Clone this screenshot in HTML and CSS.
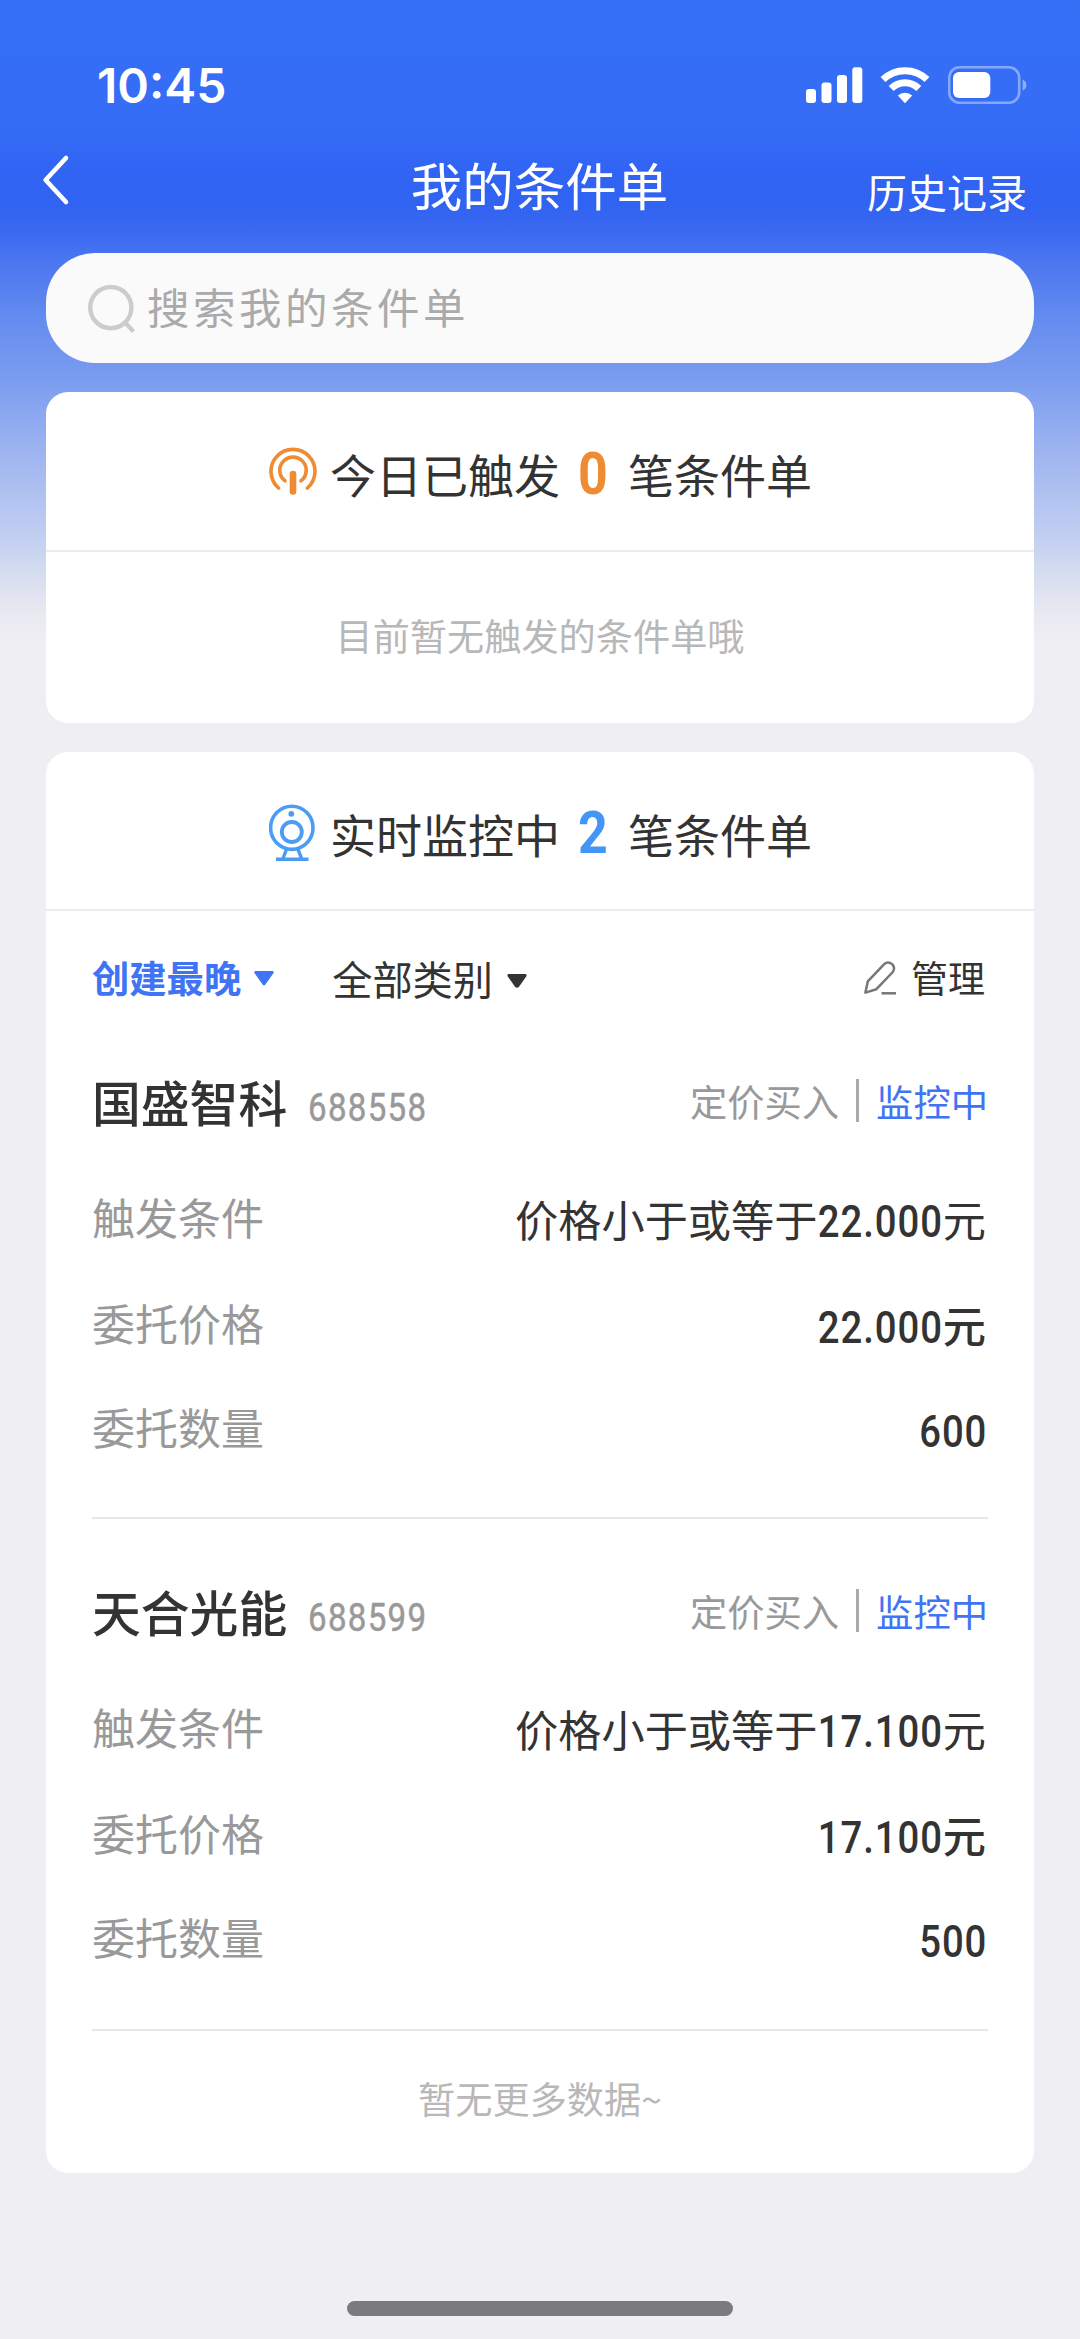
FILE: index.html
```html
<!DOCTYPE html>
<html lang="zh-CN">
<head>
<meta charset="utf-8">
<title>我的条件单</title>
<link rel="stylesheet" href="styles.css">
</head>
<body>
<div class="screen">
  <header class="status-bar">
    <span class="clock">10:45</span>
    <div class="status-icons">
      <svg class="signal" width="57" height="38" viewBox="0 0 57 38" fill="#fff">
        <rect x="0" y="23" width="10" height="14" rx="3"/>
        <rect x="15.5" y="16.5" width="10" height="20.5" rx="3"/>
        <rect x="31" y="9" width="10" height="28" rx="3"/>
        <rect x="46.3" y="1.3" width="10" height="35.7" rx="3"/>
      </svg>
      <svg class="wifi" width="50" height="38" viewBox="0 0 50 38">
        <g fill="none" stroke="#fff" stroke-width="7">
          <path d="M3 13.6A31.5 31.5 0 0 1 47 13.6"/>
          <path d="M11.2 22.4A19.6 19.6 0 0 1 38.8 22.4"/>
        </g>
        <path fill="#fff" d="M25 37.3L17.8 29.6A10.6 10.6 0 0 1 32.2 29.6Z"/>
      </svg>
      <svg class="battery" width="80" height="38" viewBox="0 0 80 38">
        <rect x="1.2" y="1.2" width="70" height="35.6" rx="10.5" fill="none" stroke="#fff" stroke-opacity=".4" stroke-width="2.6"/>
        <rect x="5" y="6" width="37.3" height="26" rx="6" fill="#fff"/>
        <path d="M74.6 13.5Q78.3 15 78.3 19T74.6 24.5Z" fill="#fff" fill-opacity=".45"/>
      </svg>
    </div>
  </header>

  <nav class="nav">
    <svg class="back" width="30" height="52" viewBox="0 0 30 52" fill="none" stroke="#fff" stroke-width="4.6" stroke-linecap="round" stroke-linejoin="round"><path d="M25 4L4.6 26L25 48"/></svg>
    <h1 class="nav-title">我的条件单</h1>
    <a class="nav-link">历史记录</a>
  </nav>

  <div class="search">
    <svg width="48" height="50" viewBox="0 0 48 50" fill="none" stroke="#ccc" stroke-width="4.4"><circle cx="22.8" cy="24.6" r="20.6"/><path d="M37 39.5L45.5 48.5"/></svg>
    <span class="placeholder">搜索我的条件单</span>
  </div>

  <section class="card triggered">
    <div class="card-head">
      <svg class="head-icon" width="48" height="50" viewBox="0 0 48 50" fill="none" stroke="#ee8b33" stroke-linecap="round">
        <path stroke-width="3.6" d="M9.6 42A22 22 0 1 1 38.4 42"/>
        <path stroke-width="3.6" d="M16 34.8A13.2 13.2 0 1 1 32 34.8"/>
        <path stroke-width="6.6" d="M24 28V45.5"/>
      </svg>
      <span class="head-text">今日已触发</span>
      <b class="count orange">0</b>
      <span class="head-text">笔条件单</span>
    </div>
    <p class="empty">目前暂无触发的条件单哦</p>
  </section>

  <section class="card monitoring">
    <div class="card-head">
      <svg class="head-icon cam" width="48" height="58" viewBox="0 0 48 58" fill="none" stroke="#4a9cf5">
        <ellipse cx="22.8" cy="23.8" rx="21.2" ry="21.6" stroke-width="3.6"/>
        <circle cx="22.8" cy="28" r="10" stroke-width="3.8"/>
        <circle cx="22.3" cy="9.8" r="2.9" fill="#4a9cf5" stroke="none"/>
        <path stroke-width="3.4" d="M17.6 45L14.2 54M28.8 45L32.4 54M7 55.3H39.5"/>
      </svg>
      <span class="head-text">实时监控中</span>
      <b class="count blue">2</b>
      <span class="head-text">笔条件单</span>
    </div>

    <div class="filters">
      <span class="filter-sort">创建最晚</span>
      <svg class="caret" width="20" height="15" viewBox="0 0 20 15" fill="#3f74f4"><path d="M1.5 0H18.5Q20.6 .4 19.2 2.6L11.4 13.4Q10 15.6 8.6 13.4L.8 2.6Q-.6 .4 1.5 0Z"/></svg>
      <span class="filter-type">全部类别</span>
      <svg class="caret" width="20" height="14" viewBox="0 0 20 14" fill="#333"><path d="M1.5 0H18.5Q20.4 .4 19.2 2.4L12 12.8Q10 14.8 8 12.8L.8 2.4Q-.4 .4 1.5 0Z"/></svg>
      <span class="manage">
        <svg width="34" height="36" viewBox="0 0 34 36" fill="none" stroke="#777" stroke-width="2.5" stroke-linejoin="round"><path d="M2.4 32.6L4.8 21.4L21.2 4.2Q25 .8 29.4 4.4Q32.4 8 29.8 12L13.4 29.2Z"/><path d="M18.5 33.3H33"/></svg>
        管理
      </span>
    </div>

    <article class="order">
      <div class="order-head">
        <h2 class="stock">国盛智科</h2><span class="code">688558</span>
        <span class="kind">定价买入</span><i class="bar"></i><span class="state">监控中</span>
      </div>
      <div class="row"><span class="label">触发条件</span><span class="value">价格小于或等于<span class="num">22.000</span>元</span></div>
      <div class="row price"><span class="label">委托价格</span><span class="value strong"><span class="num">22.000</span>元</span></div>
      <div class="row amount"><span class="label">委托数量</span><span class="value"><span class="num qty">600</span></span></div>
    </article>

    <article class="order">
      <div class="order-head">
        <h2 class="stock">天合光能</h2><span class="code">688599</span>
        <span class="kind">定价买入</span><i class="bar"></i><span class="state">监控中</span>
      </div>
      <div class="row"><span class="label">触发条件</span><span class="value">价格小于或等于<span class="num">17.100</span>元</span></div>
      <div class="row price"><span class="label">委托价格</span><span class="value strong"><span class="num">17.100</span>元</span></div>
      <div class="row amount"><span class="label">委托数量</span><span class="value"><span class="num qty">500</span></span></div>
    </article>

    <p class="no-more">暂无更多数据~</p>
  </section>

  <div class="home-indicator"></div>
</div>
</body>
</html>
```
FILE: styles.css
```css
* { box-sizing: border-box; margin: 0; padding: 0; }

body {
  width: 1080px;
  font-family: "Noto Sans CJK SC", sans-serif;
  color: #333;
}

svg { display: block; flex: none; }

.screen {
  width: 1080px;
  height: 2339px;
  display: flex;
  flex-direction: column;
  padding: 0 46px;
  overflow: hidden;
  white-space: nowrap;
  background: #eeeef3 linear-gradient(#356ff6 0, #356df6 120px, #3164f4 170px, #3163f2 205px, #3c6af0 235px, #4a76f0 260px, #658cef 320px, #7b9df0 380px, #a4b8f0 465px, #c3d0f0 540px, #d6ddf0 575px, #e9e9f1 615px, #eeeef3 640px) no-repeat;
}

.status-bar {
  height: 116px;
  padding: 55px 6px 0 51px;
  display: flex;
  align-items: center;
  justify-content: space-between;
}
.clock { color: #fff; font: 600 48px/60px Inter, sans-serif; }
.status-icons { display: flex; align-items: center; margin-top: -2px; }
.wifi { margin-left: 17px; }
.battery { margin-left: 18px; }

.nav {
  height: 137px;
  display: grid;
  grid-template-columns: 1fr auto 1fr;
  align-items: center;
  color: #fff;
}
.back { margin: -9px 0 0 -5px; }
.nav-title { font-size: 51.5px; font-weight: 400; line-height: 60px; margin: -2px 1px 0 0; }
.nav-link { justify-self: end; font-size: 40px; line-height: 48px; margin: 12px 7px 0 0; }

.search {
  height: 110px;
  border-radius: 49px;
  background: #fafafa;
  display: flex;
  align-items: center;
  padding-left: 42px;
}
.placeholder { margin: -6px 0 0 11px; font-size: 42.5px; letter-spacing: 3.5px; color: #aaa; }

.card { background: #fff; border-radius: 22px; margin-top: 29px; }
.triggered { height: 331px; }
.monitoring { height: 1421px; }

.card-head {
  height: 159px;
  display: flex;
  align-items: center;
  justify-content: center;
  border-bottom: 2px solid #ececee;
}
.triggered .card-head { height: 160px; }
.head-icon { width: 48px; margin-left: 1px; }
.cam { margin-top: 4px; }
.head-text { font-size: 46px; line-height: 60px; margin-top: 4px; }
.head-icon + .head-text { margin-left: 13px; }
.count { font: 700 59px/64px Roboto, sans-serif; margin: 5px 18px 0 16px; transform: scaleX(.88); }
.orange { color: #ee8b33; }
.blue { color: #4496f6; }

.empty { font-size: 37.2px; line-height: 60px; margin-top: 53px; text-align: center; color: #b8b8b8; }

.filters { height: 130px; padding: 1px 49px 0 46px; display: flex; align-items: center; }
.filter-sort { font-size: 37.3px; font-weight: 700; color: #3f74f4; }
.filter-sort + .caret { margin-left: 13px; margin-top: 3px; }
.filter-type { font-size: 40.2px; margin: 2px 0 0 58px; }
.filter-type + .caret { margin-left: 14px; margin-top: 9px; }
.manage { margin-left: auto; display: flex; align-items: center; gap: 14px; font-size: 37px; }
.manage svg { margin-top: 2px; }

.order { margin: 0 46px; height: 478px; border-bottom: 2px solid #e8e8e8; }
.order + .order { height: 512px; padding-top: 32px; }
.order-head { height: 120px; display: flex; align-items: center; }
.stock { font-size: 48.8px; font-weight: 500; line-height: 60px; }
.code {
  font: 400 38px/48px Roboto, sans-serif;
  color: #999;
  margin: 13px 0 0 21px;
  letter-spacing: 1.5px;
  transform: scaleX(.87);
  transform-origin: left;
  -webkit-text-stroke: .5px #999;
}
.kind { margin: -1px 0 0 auto; font-size: 37.3px; color: #999; }
.bar { width: 3px; height: 43px; background: #aaa; margin: -1px 17px 0; }
.state { font-size: 37.3px; color: #3f74f4; margin-top: -1px; }

.row { height: 105px; display: flex; align-items: center; justify-content: space-between; padding-right: 2px; }
.price { height: 107px; }
.amount { height: 101px; }
.label { font-size: 43px; line-height: 60px; height: 60px; margin-top: 5px; color: #999; }
.value { font-size: 43.2px; line-height: 60px; height: 60px; margin-top: 8px; }
.strong { font-weight: 500; }
.num {
  display: inline-block;
  font: 500 44px/60px Roboto, sans-serif;
  letter-spacing: 1.1px;
  margin-left: -18.5px;
  transform: scaleX(.87);
  transform-origin: right;
}
.qty { margin-right: -1px; }

.no-more { font-size: 37.2px; line-height: 60px; margin-top: 37px; text-align: center; color: #b8b8b8; }

.home-indicator { width: 386px; height: 15px; border-radius: 8px; background: #7b7b7d; margin: 128px auto 0; }
```
